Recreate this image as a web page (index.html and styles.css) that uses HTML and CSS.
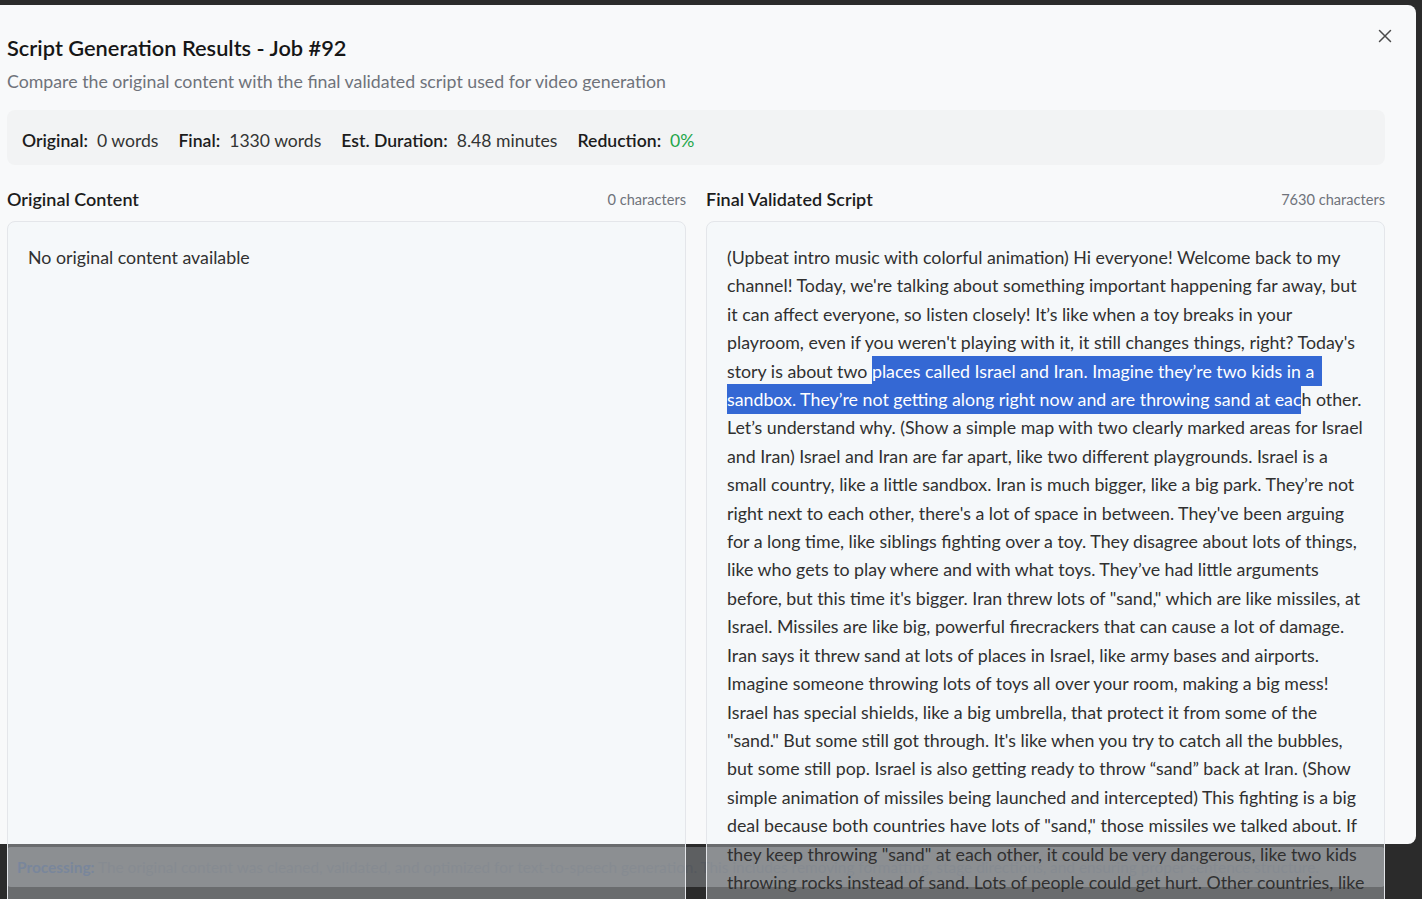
FILE: index.html
```html
<!DOCTYPE html>
<html lang="en">
<head>
<meta charset="utf-8">
<title>Script Generation Results - Job #92</title>
<link rel="stylesheet" href="styles.css">
</head>
<body>
<div class="modal">
  <button class="close" aria-label="Close">
    <svg width="16" height="16" viewBox="0 0 16 16"><path d="M2.5 2.5 L13.5 13.5 M13.5 2.5 L2.5 13.5" stroke="#4b4b4b" stroke-width="1.5" fill="none" stroke-linecap="round"/></svg>
  </button>
  <h1 class="title">Script Generation Results - Job #92</h1>
  <p class="subtitle">Compare the original content with the final validated script used for video generation</p>

  <div class="stats">
    <div class="stat"><span class="stat-label">Original:</span><span class="stat-value">0 words</span></div>
    <div class="stat"><span class="stat-label">Final:</span><span class="stat-value">1330 words</span></div>
    <div class="stat"><span class="stat-label">Est. Duration:</span><span class="stat-value">8.48 minutes</span></div>
    <div class="stat"><span class="stat-label">Reduction:</span><span class="stat-value green">0%</span></div>
  </div>

  <div class="columns">
    <section class="col">
      <div class="col-head">
        <h2 class="col-title">Original Content</h2>
        <span class="col-count">0 characters</span>
      </div>
      <div class="panel">
        <p>No original content available</p>
      </div>
    </section>
    <section class="col">
      <div class="col-head">
        <h2 class="col-title">Final Validated Script</h2>
        <span class="col-count">7630 characters</span>
      </div>
      <div class="panel">
        <p>(Upbeat intro music with colorful animation) Hi everyone! Welcome back to my channel! Today, we're talking about something important happening far away, but it can affect everyone, so listen closely! It’s like when a toy breaks in your playroom, even if you weren't playing with it, it still changes things, right? Today's story is about two <span class="sel sel-end">places called Israel and Iran. Imagine they’re two kids in a</span> <span class="sel">sandbox. They’re not getting along right now and are throwing sand at eac</span>h other. Let’s understand why. (Show a simple map with two clearly marked areas for Israel and Iran) Israel and Iran are far apart, like two different playgrounds. Israel is a small country, like a little sandbox. Iran is much bigger, like a big park. They’re not right next to each other, there's a lot of space in between. They've been arguing for a long time, like siblings fighting over a toy. They disagree about lots of things, like who gets to play where and with what toys. They’ve had little arguments before, but this time it's bigger. Iran threw lots of "sand," which are like missiles, at Israel. Missiles are like big, powerful firecrackers that can cause a lot of damage. Iran says it threw sand at lots of places in Israel, like army bases and airports. Imagine someone throwing lots of toys all over your room, making a big mess! Israel has special shields, like a big umbrella, that protect it from some of the "sand." But some still got through. It's like when you try to catch all the bubbles, but some still pop. Israel is also getting ready to throw “sand” back at Iran. (Show simple animation of missiles being launched and intercepted) This fighting is a big deal because both countries have lots of "sand," those missiles we talked about. If they keep throwing "sand" at each other, it could be very dangerous, like two kids throwing rocks instead of sand. Lots of people could get hurt. Other countries, like</p>
      </div>
    </section>
  </div>

  <div class="processing">
    <p><strong>Processing:</strong> The original content was cleaned, validated, and optimized for text-to-speech generation. This includes removing formatting, stage directions, and ensuring proper sentence structure.</p>
  </div>
</div>
</body>
</html>
```
FILE: styles.css
```css
* { box-sizing: border-box; }

html, body {
  margin: 0;
  height: 899px;
  overflow: hidden;
}

body {
  background: #2b2b2b;
  font-family: Lato, "Segoe UI", "Noto Sans", sans-serif;
  color: #2f2f2f;
}

.modal {
  position: relative;
  margin: 5px 0 0 -24px;
  width: 1440px;
  height: 839px;
  background: #f8f9fa;
  border-radius: 8px;
  padding: 28px 31px 0;
}

.close {
  position: absolute;
  top: 23px;
  right: 23px;
  width: 16px;
  height: 16px;
  padding: 0;
  border: 0;
  background: none;
  display: flex;
}

.title {
  margin: 0;
  font-size: 21.8px;
  line-height: 30px;
  font-weight: 600;
  color: #161616;
}

.subtitle {
  margin: 6px 0 0;
  font-size: 17.75px;
  line-height: 24px;
  color: #6f737a;
}

.stats {
  margin-top: 17px;
  height: 55px;
  background: #f2f3f4;
  border-radius: 8px;
  padding: 5px 15px 0;
  display: flex;
  align-items: center;
  gap: 20px;
  font-size: 17.6px;
}

.stat {
  display: flex;
  gap: 9px;
}

.stat-label {
  font-weight: 600;
  color: #1c1c1c;
}

.stat-value {
  color: #333;
}

.stat-value.green {
  color: #1fa64a;
}

.columns {
  margin-top: 23px;
  height: 643px;
  display: grid;
  grid-template-columns: 1fr 1fr;
  gap: 20px;
}

.col {
  z-index: 1;
  display: flex;
  flex-direction: column;
  min-height: 0;
}

.col-head {
  display: flex;
  justify-content: space-between;
  align-items: center;
  height: 24px;
  margin-bottom: 11px;
}

.col-title {
  margin: 0;
  font-size: 18px;
  font-weight: 600;
  color: #1c1c1c;
}

.col-count {
  font-size: 14.6px;
  color: #6f737a;
}

.panel {
  flex: none;
  height: 700px;
  border: 1px solid #e4e6ea;
  border-radius: 8px;
  background: rgba(239, 245, 252, 0.32);
  padding: 21px 18px 20px 20px;
  font-size: 17.8px;
  line-height: 28.4px;
  color: #303030;
}

.panel p {
  margin: 0;
}

.sel {
  background: #3468d4;
  color: #fff;
  padding: 4px 0;
}

.sel-end {
  padding-right: 8px;
}

.processing {
  margin-top: 16px;
  height: 40px;
  border-radius: 4px;
  background: rgba(239, 246, 255, 0.26);
  padding: 0 10px;
  display: flex;
  align-items: center;
  white-space: nowrap;
  font-size: 15.4px;
  color: #55595f;
}

.processing p {
  margin: 0;
}

.processing strong {
  color: #42526e;
  font-weight: 700;
}
```
